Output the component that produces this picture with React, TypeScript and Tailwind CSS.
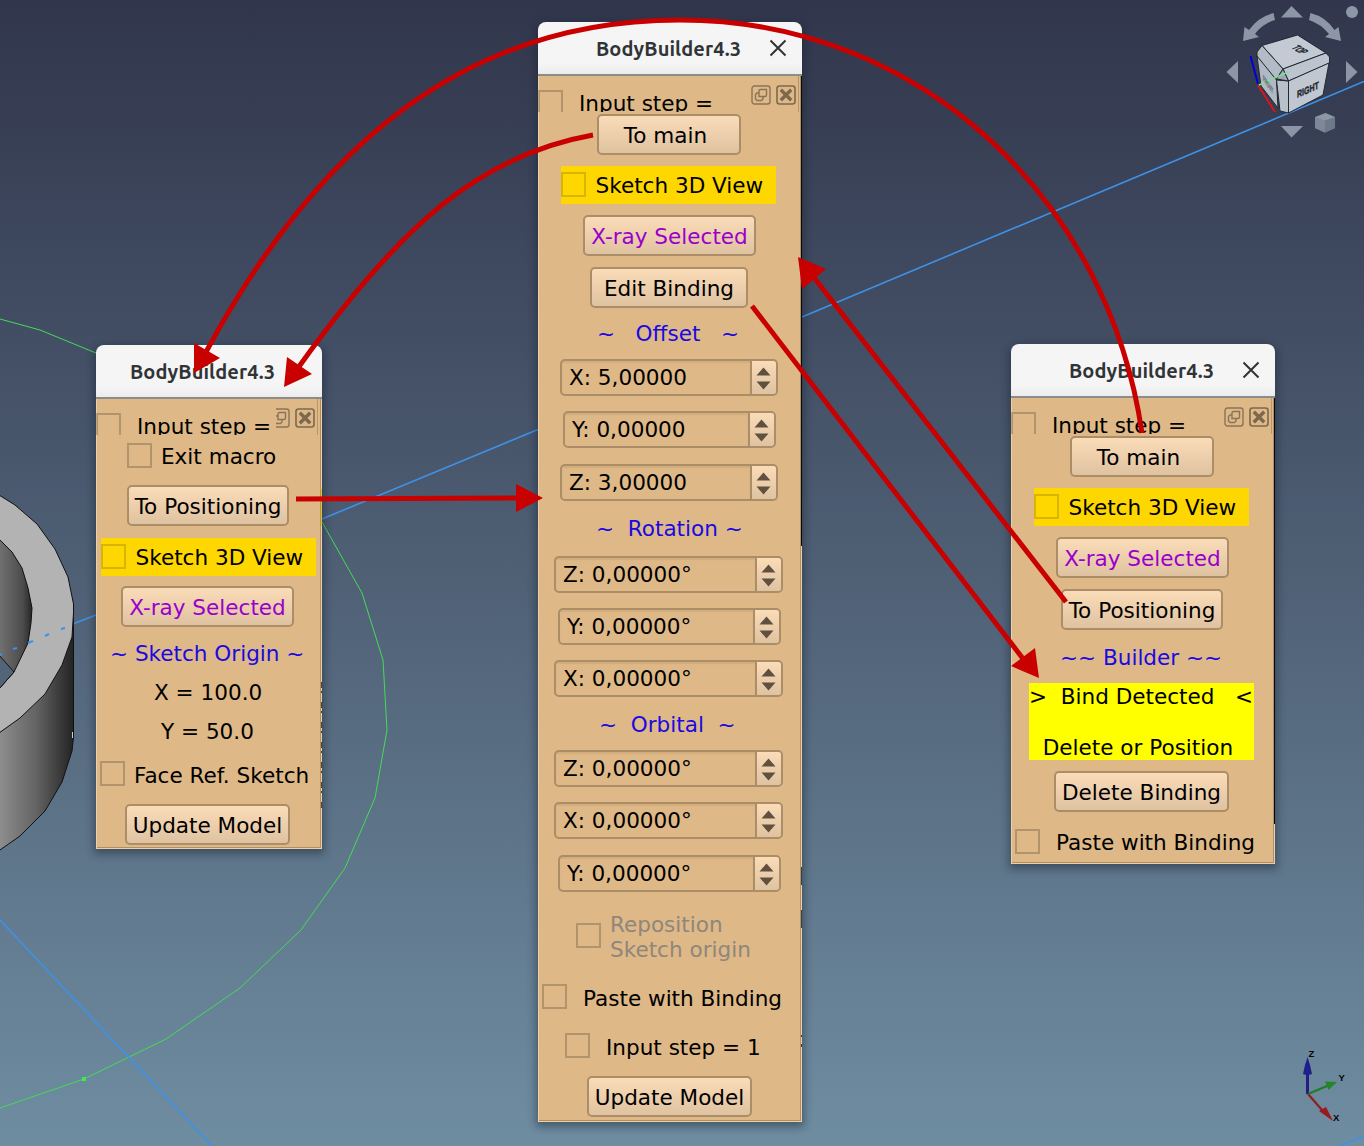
import type { ReactNode } from 'react';

function TitleBar({ title, pad, close = true }: { title: string; pad: string; close?: boolean }) {
  return (
    <div className="flex h-[54px] shrink-0 items-center rounded-t-lg border-b-2 border-[#8b8c8c] bg-gradient-to-b from-[#f5f5f5] from-80% to-[#ececec]">
      <span className={`${pad} mt-[2px] w-[145px] whitespace-nowrap font-['Ubuntu','Noto_Sans',sans-serif] text-[20px] font-bold leading-[50px] tracking-[0.1px] text-[#303436]`}>
        {title}
      </span>
      {close && (
        <svg className="ml-[28px] h-[18px] w-[18px]" viewBox="0 0 18 18" stroke="#303436" strokeWidth="2">
          <path d="M1.5 1.5 16.5 16.5M16.5 1.5 1.5 16.5" />
        </svg>
      )}
    </div>
  );
}

function Check({ className = 'border-black/20' }: { className?: string }) {
  return <span className={`h-[25px] w-[25px] shrink-0 border-2 ${className}`} />;
}

function Button({ className, children }: { className: string; children: ReactNode }) {
  return (
    <button
      className={`flex h-[41px] shrink-0 items-center justify-center rounded-[5px] border-2 border-[#ab8d68] bg-gradient-to-b from-[#fbdcb9] to-[#dfc2a0] pt-[3px] ${className}`}
    >
      {children}
    </button>
  );
}

function Label({ className, children }: { className: string; children: ReactNode }) {
  return <div className={`h-[26px] shrink-0 leading-[28px] ${className}`}>{children}</div>;
}

function Spin({ className, children }: { className: string; children: ReactNode }) {
  return (
    <div className={`flex h-[37px] shrink-0 overflow-hidden rounded-[5px] border-2 border-[#ab8d68] ${className}`}>
      <span className="flex-1 pl-[7px] leading-[34px] shadow-[inset_0_2px_1px_rgba(120,80,30,0.1)]">{children}</span>
      <span className="flex w-[26px] items-center justify-center border-l-2 border-[#ab8d68] bg-gradient-to-b from-[#fbdcb9] to-[#dfc2a0]">
        <svg className="mr-[2px] mt-px h-[23px] w-[15px]" viewBox="0 0 15 23" fill="#5f503f">
          <path d="M0.5 8.5 7.5 0.5 14.5 8.5ZM0.5 14.5H14.5L7.5 22.5Z" />
        </svg>
      </span>
    </div>
  );
}

function Sketch3D({ className }: { className: string }) {
  return (
    <div className={`flex h-[38px] w-[215px] shrink-0 items-center bg-[#ffd700] ${className}`}>
      <Check className="-mt-[2px] border-[#d8b500]" />
      <span className="ml-[9.5px] mt-[3px]">Sketch 3D View</span>
    </div>
  );
}

function FloatIcon() {
  return (
    <svg className="h-[20px] w-[20px] shrink-0" viewBox="0 0 20 20" fill="none" stroke="#8a7458" strokeWidth="1.4">
      <rect x="1" y="1" width="18" height="18" rx="2.5" />
      <path d="M8 11.500V6Q8 4.500 9.500 4.500H15.500V10Q15.500 11.500 14 11.500ZM8 8H6L4.500 9.500V14L6 15.500H10.500L12 14V11.500" />
    </svg>
  );
}

function CloseIcon() {
  return (
    <svg className="h-[20px] w-[20px] shrink-0" viewBox="0 0 20 20" fill="none" stroke="#7d684e">
      <rect x="1" y="1" width="18" height="18" rx="2.5" strokeWidth="1.6" />
      <path d="M4.800 4.800 15.200 15.200M15.200 4.800 4.800 15.200" strokeWidth="3.4" />
    </svg>
  );
}

function DockTitle({ narrow = false }: { narrow?: boolean }) {
  return (
    <div className="flex h-[36px] shrink-0 items-start overflow-hidden">
      <Check className="mt-[14px] border-black/20" />
      <span className={narrow ? 'ml-[16px] mt-[15px] w-[139px] leading-[26px]' : 'ml-[16px] mt-[15px] w-[172px] leading-[26px]'}>Input step =</span>
      <span className={narrow ? 'mt-[9px] flex w-[14px] justify-end overflow-hidden' : 'mt-[9px] flex'}>
        <FloatIcon />
      </span>
      <span className="ml-[5px] mt-[9px] flex">
        <CloseIcon />
      </span>
      <span className="ml-[2px] h-[36px] w-px bg-[#b9976b]" />
    </div>
  );
}

function Win({ className, strip, children }: { className: string; strip: string; children: ReactNode }) {
  return (
    <section className={`absolute flex flex-col rounded-t-lg shadow-[0_3px_8px_2px_rgba(20,30,45,0.45)] ${className}`}>
      {children}
      <div className={`absolute right-0 top-[54px] w-px ${strip}`} />
    </section>
  );
}

function Body({ children }: { children: ReactNode }) {
  return (
    <div className="flex flex-1 flex-col items-start border-b border-l border-r border-[#edd0a8] bg-[#deb887] shadow-[inset_-1px_-1px_0_#b08f67] [&>*]:-ml-px">
      {children}
    </div>
  );
}

function Scene() {
  return (
    <svg className="absolute inset-0 h-full w-full" viewBox="0 0 1364 1146" fill="none">
      <defs>
        <linearGradient id="side" x1="0" x2="74" y1="0" y2="0" gradientUnits="userSpaceOnUse">
          <stop offset="0" stopColor="#8d8d8d" />
          <stop offset="0.5" stopColor="#626262" />
          <stop offset="1" stopColor="#222222" />
        </linearGradient>
        <linearGradient id="inside" x1="0" x2="33" y1="0" y2="0" gradientUnits="userSpaceOnUse">
          <stop offset="0" stopColor="#707070" />
          <stop offset="0.7" stopColor="#4b4b4b" />
          <stop offset="1" stopColor="#222222" />
        </linearGradient>
      </defs>
      <path d="M0 319 40 330 96 353M322 522 362 593 383 660 387 730 375 798 345 868 301 930 240 988 166 1039 84 1079 0 1108" stroke="#43dc55" />
      <rect x="82" y="1077" width="4" height="4" fill="#43e64d" />
      <path d="M1364 81.500 802 317 538 429.500 322 519 96 615 74 623.500" stroke="#3d92e8" strokeWidth="1.6" />
      <path d="M0 920 212 1146M1338 1147 1364 1136" stroke="#3d92e8" strokeWidth="1.6" />
      <path d="M73.500 604V737L72 751 62 782 45 811 20 836 0 850V733L20 718 45 694 62 665 72 637Z" fill="url(#side)" />
      <path d="M73.500 604V737L72 751 62 782 45 811 20 836 0 850" stroke="#111" />
      <path d="M-1 495 15 505 37 524 55 549 68 577 73.500 604V613L72 637 62 665 45 694 20 718-1 733Z" fill="#b3b3b3" stroke="#111" />
      <path d="M-1 539 12 552 22 568 28 588 32 608 31 623 28 643 14 672-1 689Z" fill="url(#inside)" stroke="#111" />
      <path d="M-1 655 14 672-1 689Z" fill="#526479" stroke="#111" />
      <path d="M72.500 732V738" stroke="#d0d0d0" />
      <path d="M0 655 2 654M13 649 17 648M28 643 33 641M45 636 49 634M61 629 65 628" stroke="#3d92e8" strokeWidth="2" />
      <NavCube />
      <g>
        <path d="M1307.500 1094V1070" stroke="#1e1e84" strokeWidth="3" />
        <path d="M1303 1074 1305 1065 1307.500 1057 1310 1065 1312 1074Q1307.500 1076 1303 1074Z" fill="#20208a" />
        <path d="M1308 1094 1327 1086" stroke="#207d25" strokeWidth="2.200" />
        <path d="M1325 1081.500 1337 1082 1328.500 1090Z" fill="#238728" />
        <path d="M1308 1094 1322 1110" stroke="#8e1f25" strokeWidth="2.200" />
        <path d="M1319 1111 1326 1107 1333 1121Z" fill="#98191e" />
        <g className="font-['Liberation_Sans',sans-serif] text-[9.5px] font-bold" fill="#050505">
          <text x="1308.500" y="1057">Z</text>
          <text x="1338.500" y="1081">Y</text>
          <text x="1333" y="1121">X</text>
        </g>
      </g>
    </svg>
  );
}

function NavCube() {
  return (
    <g>
      <g fill="#8c96a6">
        <path d="M1281 17.500 1291.500 6 1303 17.500ZM1281 126 1291.500 137.500 1303 126ZM1226.500 72 1238 61V83ZM1346 61 1357.500 72 1346 83Z" />
        <path d="M1273.500 13 1275 20Q1262 24 1255 34L1259 37 1243 41 1244.500 27 1249 30Q1258 17 1273.500 13ZM1310.500 13 1309 20Q1321 24 1329 34L1325 37 1341 41 1338.500 27 1334.500 30Q1326 17 1310.500 13Z" />
        <circle cx="1352" cy="12" r="6" />
      </g>
      <path d="M1315 117 1325.500 113 1335 117V128L1325 132.500 1315 128Z" fill="#8c97a5" />
      <path d="M1315 117 1325 120.500V132.500L1315 128Z" fill="#7c8898" />
      <path d="M1325 120.500 1335 117V128L1325 132.500Z" fill="#6d798a" />
      <g stroke="#242830" strokeLinejoin="round">
        <path d="M1262 45.500 1297.500 35 1326 53 1283 69Z" fill="#c3cad4" />
        <path d="M1262 45.500 1257 52V57L1276 80 1283 69Z" fill="#b3bbc7" />
        <path d="M1283 69 1326 53 1329.500 57V63L1288.500 81Z" fill="#bcc4cf" />
        <path d="M1288.500 81 1329 63 1323 95 1288.500 113Z" fill="#c0c7d1" />
        <path d="M1257 56 1276.500 80 1278 108 1261 86Z" fill="#b0b8c4" />
        <path d="M1276.500 80 1288.500 81V113L1280 111Z" fill="#b8c0cb" />
        <path d="M1283 69 1276.500 79 1288.500 81Z" fill="#9ca7b5" />
      </g>
      <path d="M1250.500 56 1258 84" stroke="#0000d9" strokeWidth="2" />
      <path d="M1258 85 1275 112" stroke="#d91616" strokeWidth="2" />
      <path d="M1259 85 1288 72" stroke="#7be58a" strokeWidth="1.400" />
      <g className="font-['Liberation_Sans',sans-serif] font-bold" fill="#22262d" stroke="#22262d" strokeWidth="0.4">
        <text transform="matrix(.91 -.4 0 1 1297 98)" fontSize="10" textLength="24" lengthAdjust="spacingAndGlyphs">RIGHT</text>
        <text transform="matrix(.62 .38 -.85 .35 1291 48) scale(1 1.3)" fontSize="10" textLength="17" lengthAdjust="spacingAndGlyphs">TOP</text>
        <text transform="matrix(.5 .72 0 1 1263 80)" fontSize="8" textLength="20" opacity=".5" lengthAdjust="spacingAndGlyphs">FRONT</text>
      </g>
    </g>
  );
}

function Arrows() {
  return (
    <svg className="pointer-events-none absolute inset-0 h-full w-full" viewBox="0 0 1364 1146" fill="none">
      <path d="M321.500 489V526" stroke="#e2c21c" />
      <path d="M321.500 682V810" stroke="#4e4535" strokeDasharray="6 3 2 9" />
      <path d="M801.500 867V885M801.500 910V928M801.500 1035V1037M801.500 1044V1047" stroke="#38424c" />
      <g stroke="#c80000" strokeWidth="5">
        <path d="M1142 433C1108 200 922 20 680 20 470 20 320 140 206 352" />
        <path d="M593 135C480 155 400 225 298 368" />
        <path d="M296 499 520 498" />
        <path d="M752 306 1024 660" />
        <path d="M1066 602 812 275" />
      </g>
      <path d="M194 343 220 358 194 373ZM287 357 312 374 284 387ZM516 484 543 498 516 512ZM1035 648 1011 666 1039 678ZM798 257 826 269 802 289Z" fill="#c80000" />
    </svg>
  );
}

export default function App() {
  return (
    <main className="relative h-[1146px] w-[1364px] overflow-hidden whitespace-pre bg-gradient-to-b from-[#31364c] to-[#6f8da1] font-['DejaVu_Sans',sans-serif] text-[21.55px] text-black">
      <Scene />

      <Win className="left-[96px] top-[345px] h-[504px] w-[226px]" strip="h-0">
        <TitleBar title="BodyBuilder4.3" pad="ml-[34px]" close={false} />
        <Body>
          <DockTitle narrow />
          <div className="ml-[30px]! mt-[8px] flex h-[25px] items-center">
            <Check />
            <span className="ml-[9px] mt-[4px]">Exit macro</span>
          </div>
          <Button className="ml-[30px]! mt-[17px] w-[162px]">To Positioning</Button>
          <Sketch3D className="ml-[4px]! mt-[12px]" />
          <Button className="ml-[24px]! mt-[10px] w-[173px] text-[#9a00cc]">X-ray Selected</Button>
          <Label className="ml-[13px]! mt-[13px] text-[#1a0ae0]">~ Sketch Origin ~</Label>
          <Label className="ml-[57px]! mt-[13px]">X = 100.0</Label>
          <Label className="ml-[64px]! mt-[13px]">Y = 50.0</Label>
          <div className="ml-[3px]! mt-[17px] flex h-[25px] items-center">
            <Check />
            <span className="ml-[9px] mt-[5px]">Face Ref. Sketch</span>
          </div>
          <Button className="ml-[28px]! mt-[18px] w-[165px]">Update Model</Button>
        </Body>
      </Win>

      <Win className="left-[538px] top-[22px] h-[1100px] w-[264px]" strip="h-[470px] bg-[#0c0a08]">
        <TitleBar title="BodyBuilder4.3" pad="ml-[58px]" />
        <Body>
          <DockTitle />
          <Button className="ml-[58px]! mt-[2px] w-[144px] pr-[7px]">To main</Button>
          <Sketch3D className="ml-[22px]! mt-[11px]" />
          <Button className="ml-[44px]! mt-[11px] w-[173px] text-[#9a00cc]">X-ray Selected</Button>
          <Button className="ml-[51px]! mt-[11px] w-[158px]">Edit Binding</Button>
          <Label className="ml-[58px]! mt-[12px] text-[#1a0ae0]">{'~   Offset   ~'}</Label>
          <Spin className="ml-[21px]! mt-[13px] w-[218px]">X: 5,00000</Spin>
          <Spin className="ml-[24px]! mt-[15px] w-[213px]">Y: 0,00000</Spin>
          <Spin className="ml-[21px]! mt-[16px] w-[218px]">Z: 3,00000</Spin>
          <Label className="ml-[57px]! mt-[14px] text-[#1a0ae0]">{'~  Rotation ~'}</Label>
          <Spin className="ml-[15px]! mt-[15px] w-[229px]">Z: 0,00000°</Spin>
          <Spin className="ml-[19px]! mt-[15px] w-[223px]">Y: 0,00000°</Spin>
          <Spin className="ml-[15px]! mt-[15px] w-[229px]">X: 0,00000°</Spin>
          <Label className="ml-[60px]! mt-[14px] text-[#1a0ae0]">{'~  Orbital  ~'}</Label>
          <Spin className="ml-[15px]! mt-[13px] w-[229px]">Z: 0,00000°</Spin>
          <Spin className="ml-[15px]! mt-[15px] w-[229px]">X: 0,00000°</Spin>
          <Spin className="ml-[19px]! mt-[16px] w-[223px]">Y: 0,00000°</Spin>
          <div className="ml-[37px]! mt-[20px] flex h-[50px] items-center">
            <Check className="-mt-[3px] border-black/20" />
            <span className="ml-[9px] leading-[25px] text-[#8f877c]">{'Reposition\nSketch origin'}</span>
          </div>
          <div className="ml-[3px]! mt-[22px] flex h-[25px] items-center">
            <Check />
            <span className="ml-[16px] mt-[5px]">Paste with Binding</span>
          </div>
          <div className="ml-[26px]! mt-[24px] flex h-[25px] items-center">
            <Check />
            <span className="ml-[16px] mt-[5px]">Input step = 1</span>
          </div>
          <Button className="ml-[48px]! mt-[18px] w-[165px]">Update Model</Button>
        </Body>
      </Win>

      <Win className="left-[1011px] top-[344px] h-[520px] w-[264px]" strip="h-[426px] bg-[#0c0a08]">
        <TitleBar title="BodyBuilder4.3" pad="ml-[58px]" />
        <Body>
          <DockTitle />
          <Button className="ml-[58px]! mt-[2px] w-[144px] pr-[7px]">To main</Button>
          <Sketch3D className="ml-[22px]! mt-[11px]" />
          <Button className="ml-[44px]! mt-[11px] w-[173px] text-[#9a00cc]">X-ray Selected</Button>
          <Button className="ml-[49px]! mt-[11px] w-[162px]">To Positioning</Button>
          <Label className="ml-[48px]! mt-[14px] text-[#1a0ae0]">~~ Builder ~~</Label>
          <div className="ml-[17px]! mt-[13px] h-[77px] w-[225px] bg-[#ffff00] pt-px leading-[25.5px]">
            {'>  Bind Detected   <\n\n  Delete or Position'}
          </div>
          <Button className="ml-[42px]! mt-[11px] w-[175px]">Delete Binding</Button>
          <div className="ml-[3px]! mt-[17px] flex h-[25px] items-center">
            <Check />
            <span className="ml-[16px] mt-[4px]">Paste with Binding</span>
          </div>
        </Body>
      </Win>

      <Arrows />
    </main>
  );
}
